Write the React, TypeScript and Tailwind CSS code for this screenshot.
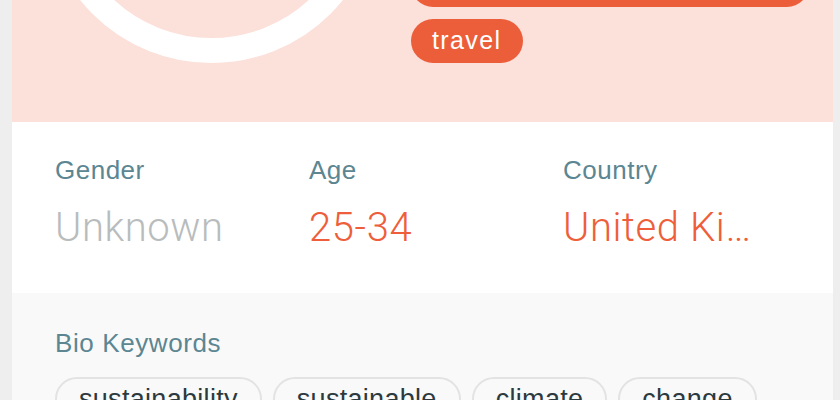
import React from "react";

const topTags = ["sustainable development"];
const moreTags = ["travel"];
const keywords = ["sustainability", "sustainable", "climate", "change", "energy"];

const stats = [
  { label: "Gender", value: "Unknown", muted: true },
  { label: "Age", value: "25-34", muted: false },
  { label: "Country", value: "United Kingdom", muted: false },
];

export default function App() {
  return (
    <div
      className="flex h-[400px] w-[840px] overflow-hidden bg-[#eeeeee] pl-[12px] pr-[7px]"
      style={{ fontFamily: '"Liberation Sans", Arial, sans-serif' }}
    >
      <div className="flex min-w-0 flex-1 flex-col bg-white">
        {/* header */}
        <div className="flex h-[122px] shrink-0 flex-col justify-end overflow-hidden bg-[#fce0da] pb-[59px]">
          <div className="flex items-end">
            <div className="ml-[31px] h-[337px] w-[337px] shrink-0 rounded-full border-[25px] border-white" />
            <div className="ml-[31px] flex w-[398px] flex-col items-start gap-[12px]">
              {topTags.map((t) => (
                <span
                  key={t}
                  className="flex h-[44px] w-full items-center rounded-full bg-[#ec5e3a] px-[21px] text-[24px] text-white"
                >
                  {t}
                </span>
              ))}
              {moreTags.map((t) => (
                <span
                  key={t}
                  className="flex h-[44px] items-center rounded-full bg-[#ec5e3a] px-[21px] text-[25px] tracking-[1.4px] text-white"
                >
                  {t}
                </span>
              ))}
            </div>
          </div>
        </div>

        {/* stats */}
        <div className="grid h-[171px] shrink-0 grid-cols-[254px_254px_254px] px-[43px] pt-[33px]">
          {stats.map((s) => (
            <div key={s.label} className="flex min-w-0 flex-col">
              <span className="text-[26px] leading-[30px] tracking-[0.5px] text-[#5b8692]">
                {s.label}
              </span>
              <span
                className={`mt-[19px] max-w-[204px] truncate text-[40px] font-light leading-[48px] tracking-[0.6px] ${
                  s.muted ? "text-[#b9bcbd]" : "text-[#ee5e3b]"
                }`}
                style={{ fontFamily: "Roboto, 'Liberation Sans', sans-serif" }}
              >
                {s.value}
              </span>
            </div>
          ))}
        </div>

        {/* bio keywords */}
        <div className="flex flex-1 flex-col bg-[#f9f9f9] px-[43px] pt-[30px]">
          <span className="text-[26px] leading-[40px] tracking-[0.6px] text-[#5b8692]">
            Bio Keywords
          </span>
          <div className="mt-[14px] flex flex-wrap gap-x-[11px] gap-y-[12px]">
            {keywords.map((k) => (
              <span
                key={k}
                className="flex h-[44px] shrink-0 items-center rounded-full border-2 border-[#e3e3e3] px-[22px] text-[27px] tracking-[0.3px] text-[#2c3a40]"
              >
                {k}
              </span>
            ))}
          </div>
        </div>
      </div>
    </div>
  );
}
